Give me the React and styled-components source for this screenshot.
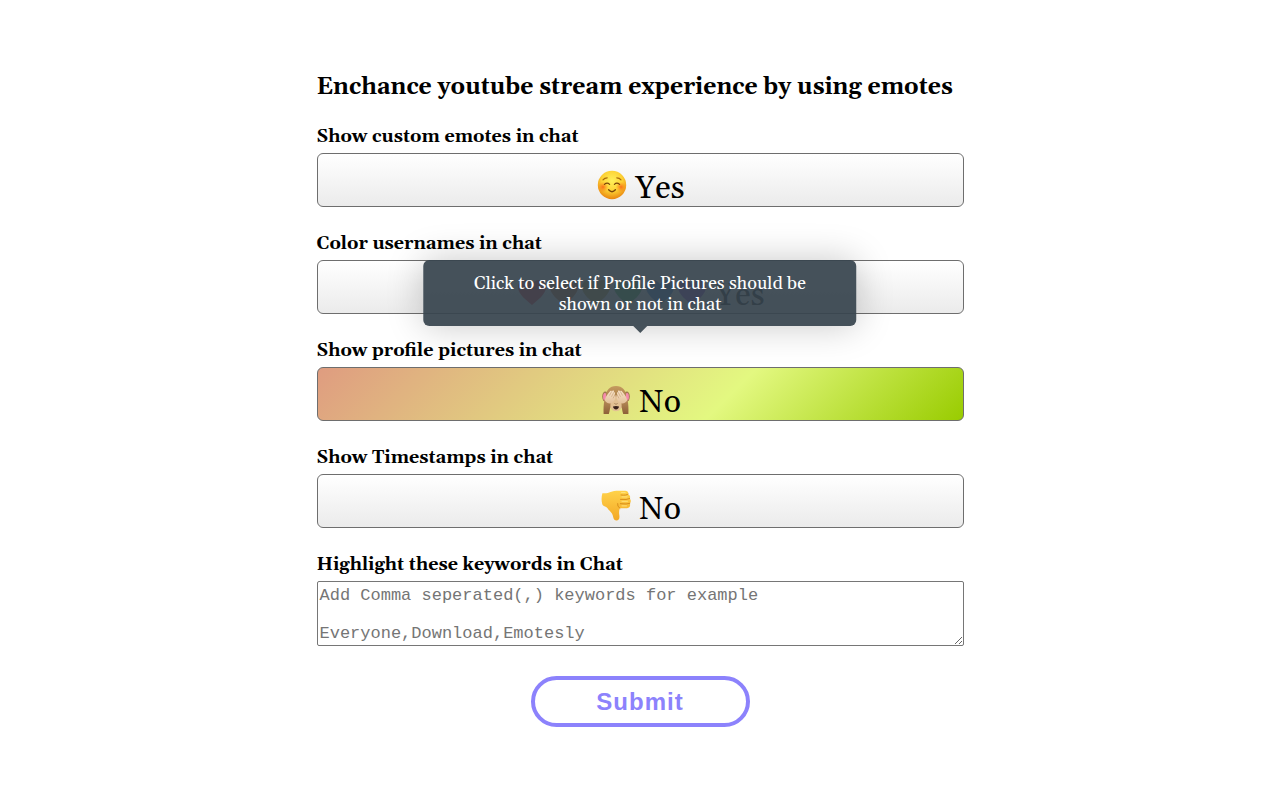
import React from 'react';
import styled, { createGlobalStyle, css } from 'styled-components';

const GlobalStyle = createGlobalStyle`
  * { box-sizing: border-box; }
  body {
    margin: 0;
    background: #fff;
    color: #000;
    font-family: Georgia, Gelasio, "Liberation Serif", serif;
  }
`;

const Page = styled.main`
  display: flex;
  justify-content: center;
  padding: 76px 16px;
`;

const Form = styled.form`
  display: flex;
  flex-direction: column;
  gap: 24px;
  width: 100%;
  max-width: 647px;
`;

const Title = styled.h1`
  margin: 0;
  font-size: 23px;
  line-height: 24px;
  font-weight: 700;
`;

const Field = styled.div`
  position: relative;
  display: flex;
  flex-direction: column;
  gap: 3px;
`;

const Label = styled.label`
  font-size: 18px;
  line-height: 26px;
  font-weight: 700;
`;

const Toggle = styled.button`
  display: flex;
  justify-content: center;
  align-items: flex-start;
  gap: 8px;
  height: 54px;
  padding: 15px 0 0;
  border: 1px solid #6e6e6e;
  border-radius: 6px;
  background: linear-gradient(#fff, #ebebeb);
  color: #000;
  font-family: inherit;
  font-size: 32px;
  line-height: 40px;
  cursor: pointer;
  ${(p) =>
    p.$active &&
    css`
      background: linear-gradient(135deg, #df9c80 0%, #e3f880 63%, #99cc00 100%);
    `}
`;

const Emotes = styled.span`
  display: flex;
`;

const Emote = styled.svg`
  display: block;
  width: 32px;
  height: 32px;
`;

const Tooltip = styled.div`
  position: absolute;
  left: 50%;
  bottom: 95px;
  width: 67%;
  transform: translateX(-50%);
  padding: 13px 40px 11px;
  border-radius: 6px;
  background: rgba(55, 68, 77, 0.93);
  box-shadow: 0 0 36px rgba(0, 0, 0, 0.22);
  color: #fff;
  font-size: 18px;
  line-height: 21px;
  text-align: center;

  &::after {
    content: '';
    position: absolute;
    top: 100%;
    left: 50%;
    margin-left: -7px;
    border: 7px solid transparent;
    border-bottom-width: 0;
    border-top-color: #46525b;
  }
`;

const Keywords = styled.textarea`
  display: block;
  width: 100%;
  height: 65px;
  padding: 4px 2px 2px;
  border: 1px solid #767676;
  border-radius: 2px;
  background: #fff;
  font-family: "Liberation Mono", monospace;
  font-size: 17px;
  line-height: 19px;
  resize: vertical;
  overflow: hidden;

  &::placeholder {
    color: #757575;
    opacity: 1;
  }
`;

const Submit = styled.button`
  align-self: center;
  width: 219px;
  height: 51px;
  margin-top: 6px;
  padding: 0;
  border: 4px solid #8c82fc;
  border-radius: 26px;
  background: #fff;
  color: #8c82fc;
  font-family: "Liberation Sans", sans-serif;
  font-size: 24px;
  line-height: 28px;
  font-weight: 700;
  letter-spacing: 1px;
  cursor: pointer;
`;

const Smile = () => (
  <Emote viewBox="0 0 32 32" aria-hidden="true">
    <defs>
      <radialGradient id="face" cx="0.5" cy="0.35" r="0.66">
        <stop offset="0" stopColor="#fff05a" />
        <stop offset="0.55" stopColor="#fdd235" />
        <stop offset="1" stopColor="#e8820e" />
      </radialGradient>
      <radialGradient id="blush">
        <stop offset="0" stopColor="#fb5f14" stopOpacity="0.85" />
        <stop offset="1" stopColor="#f8861c" stopOpacity="0" />
      </radialGradient>
    </defs>
    <circle cx="16" cy="16" r="14.2" fill="url(#face)" />
    <circle cx="7" cy="18" r="5.4" fill="url(#blush)" />
    <circle cx="25" cy="18" r="5.4" fill="url(#blush)" />
    <g fill="none" stroke="#7a4409" strokeWidth="1.2" strokeLinecap="round">
      <path d="M7 10.8Q8.6 8.8 11.2 8.8M25 10.8Q23.4 8.8 20.8 8.8" stroke="#a8690c" />
      <path d="M8.4 15.4Q11.2 12.9 13.6 15.4M18.4 15.4Q20.8 12.9 23.6 15.4" />
      <path d="M12.6 20.8Q16 24.6 19.4 20.8" strokeWidth="1.4" />
    </g>
  </Emote>
);

const Monkey = () => (
  <Emote viewBox="0 0 32 32" aria-hidden="true">
    <defs>
      <linearGradient id="fur" x2="0" y2="1">
        <stop offset="0" stopColor="#c49a5e" />
        <stop offset="1" stopColor="#96683c" />
      </linearGradient>
      <linearGradient id="arm" x2="0" y2="1">
        <stop offset="0" stopColor="#b98d5a" />
        <stop offset="1" stopColor="#8d6038" />
      </linearGradient>
      <linearGradient id="hand" x2="0" y2="1">
        <stop offset="0" stopColor="#f8e3c8" />
        <stop offset="1" stopColor="#e2bf98" />
      </linearGradient>
    </defs>
    <ellipse cx="6.2" cy="13.6" rx="3" ry="5" fill="#a07850" />
    <ellipse cx="27.8" cy="13.6" rx="3" ry="5" fill="#a07850" />
    <ellipse cx="5.9" cy="13.8" rx="1.8" ry="3.8" fill="#f58bab" />
    <ellipse cx="28.1" cy="13.8" rx="1.8" ry="3.8" fill="#f58bab" />
    <path d="M17 3C10.500 3 7 7.500 7 13c0 5 2.500 9 5 12h10c2.500-3 5-7 5-12C27 7.500 23.500 3 17 3z" fill="url(#fur)" />
    <path d="M17 14c-4 0-6 4-6 8s2.600 6.200 6 6.200 6-2.200 6-6.200-2-8-6-8z" fill="#e2c093" />
    <path d="M16 20.600l.5.5M18 20.600l-.5.5" stroke="#76502f" strokeWidth="0.8" strokeLinecap="round" />
    <path d="M14 23.600Q17 22.600 20 23.600Q19.600 26.400 17 26.400Q14.400 26.400 14 23.600z" fill="#39211c" />
    <path d="M5.500 16.500C4.600 21 4.400 26 4.600 31h5.200c1.200-3.700 1.700-7.500 1.700-12zM28.500 16.500c.9 4.500 1.100 9.500.9 14.500h-5.200c-1.200-3.700-1.700-7.500-1.700-12z" fill="url(#arm)" />
    <path d="M5.800 17.500c.3-3 2-5.200 3.800-7.500l1.700-2c.8-.8 1.800-.2 1.400.8l.8-1c.8-.7 1.800-.1 1.400.9l-.2.7c.8-.5 1.500.1 1.300 1.100l-.4 1.800c.8-.3 1.300.4 1.100 1.200-.5 2.500-1.400 5-3.300 6.200-2.200 1.400-5.600 1-7.600-2.200z" fill="url(#hand)" />
    <path d="M28.200 17.500c-.3-3-2-5.200-3.800-7.500l-1.700-2c-.8-.8-1.800-.2-1.400.8l-.8-1c-.8-.7-1.800-.1-1.400.9l.2.7c-.8-.5-1.500.1-1.300 1.100l.4 1.800c-.8-.3-1.300.4-1.100 1.200.5 2.500 1.400 5 3.300 6.200 2.200 1.400 5.600 1 7.600-2.200z" fill="url(#hand)" />
    <path d="M12.500 8.900l-1.900 3.300M14.600 9.700l-1.900 3.700M15.600 12.300l-1.300 2.700M21.500 8.900l1.900 3.300M19.400 9.700l1.900 3.700M18.400 12.300l1.300 2.700" stroke="#c49b70" strokeWidth="0.6" strokeLinecap="round" />
  </Emote>
);

const ThumbDown = () => (
  <Emote viewBox="0 0 32 32" aria-hidden="true">
    <defs>
      <linearGradient id="thumb" x2="0" y2="1">
        <stop offset="0" stopColor="#ffd24a" />
        <stop offset="1" stopColor="#f3a826" />
      </linearGradient>
    </defs>
    <path d="M3.400 3.200C7 3.600 9.200 3 11.500 2c2.300-.9 5-1.300 8-1.300h6.800c2.300 0 3.500 1.700 2.800 3.500 1.900.7 2.600 2.700 1.600 4.400 1.500 1.300 1.500 3.600.1 4.800 1 2.300-.2 4.600-2.700 4.800-2.500.2-4.900.2-7.200.1-.9 2-1 4.200-.6 6.600.5 3-.1 5.300-2.300 5.600-1.900.3-3.300-1-3.700-3-.5-2.800-1.500-4.700-3.400-6.500C8.800 19 8 17.200 6 16.600c-1.500-.4-2.500-1.300-2.900-3-.8-3.500-.7-7.200.3-10.400z" fill="url(#thumb)" />
    <path d="M29.100 4.200Q27.600 5.600 22 5M30.700 8.600Q28 10.100 21.500 9.400M30.800 13.400Q28 14.500 21.300 13.700M20.900 18.300Q18 16.800 18.600 13.600" fill="none" stroke="#d48816" strokeWidth="0.9" strokeLinecap="round" />
    <path d="M22.500 2.500h3.700M23 6.900h5M23 11.300h5.500M23 15.900h4.500" stroke="#ffe27a" strokeWidth="1" strokeLinecap="round" />
  </Emote>
);

const Heart = ({ color }) => (
  <Emote viewBox="0 0 32 32" aria-hidden="true">
    <path d="M16 29C11 24.500 2 18.500 2 11c0-4.200 3-7 6.800-7 3.200 0 5.600 1.600 7.200 4.400C17.600 5.600 20 4 23.200 4 27 4 30 6.800 30 11c0 7.500-9 13.500-14 18z" fill={color} />
  </Emote>
);

const hearts = ['#e8202c', '#c8641c', '#b8962b', '#2fb842', '#2f7fe0', '#8a3fd0'];

const toggles = [
  { id: 'emotes', label: 'Show custom emotes in chat', value: 'Yes', art: <Smile /> },
  {
    id: 'colors',
    label: 'Color usernames in chat',
    value: 'Yes',
    art: hearts.map((c) => <Heart key={c} color={c} />),
  },
  {
    id: 'pictures',
    label: 'Show profile pictures in chat',
    value: 'No',
    art: <Monkey />,
    active: true,
    hint: 'Click to select if Profile Pictures should be shown or not in chat',
  },
  { id: 'timestamps', label: 'Show Timestamps in chat', value: 'No', art: <ThumbDown /> },
];

export default function App() {
  return (
    <>
      <GlobalStyle />
      <Page>
        <Form onSubmit={(e) => e.preventDefault()}>
          <Title>Enchance youtube stream experience by using emotes</Title>
          {toggles.map((t) => (
            <Field key={t.id}>
              <Label htmlFor={t.id}>{t.label}</Label>
              <Toggle
                id={t.id}
                type="button"
                $active={t.active}
                aria-describedby={t.hint ? `${t.id}-hint` : undefined}
              >
                <Emotes>{t.art}</Emotes>
                {t.value}
              </Toggle>
              {t.hint && (
                <Tooltip id={`${t.id}-hint`} role="tooltip">
                  {t.hint}
                </Tooltip>
              )}
            </Field>
          ))}
          <Field>
            <Label htmlFor="keywords">Highlight these keywords in Chat</Label>
            <Keywords
              id="keywords"
              placeholder={'Add Comma seperated(,) keywords for example\n\nEveryone,Download,Emotesly'}
            />
          </Field>
          <Submit type="submit">Submit</Submit>
        </Form>
      </Page>
    </>
  );
}
